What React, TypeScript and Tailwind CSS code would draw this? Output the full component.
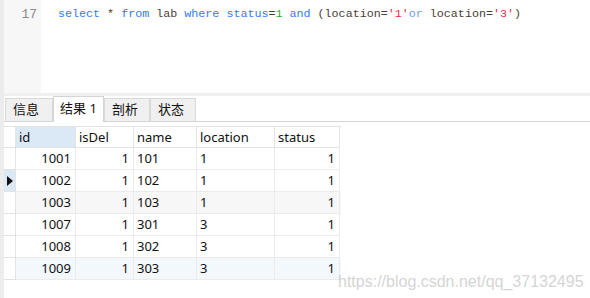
import React from "react";

const ui = { fontFamily: '"Noto Sans", "Noto Sans CJK SC", sans-serif' };
const mono = { fontFamily: '"Liberation Mono", "DejaVu Sans Mono", monospace' };

const cols = [
  { name: "id", w: "w-[60px]", right: true },
  { name: "isDel", w: "w-[58px]", right: true },
  { name: "name", w: "w-[63px]", right: false },
  { name: "location", w: "w-[78px]", right: false },
  { name: "status", w: "w-[65px]", right: true },
];

const rows = [
  ["1001", "1", "101", "1", "1"],
  ["1002", "1", "102", "1", "1"],
  ["1003", "1", "103", "1", "1"],
  ["1007", "1", "301", "3", "1"],
  ["1008", "1", "302", "3", "1"],
  ["1009", "1", "303", "3", "1"],
];

const rowBg = ["bg-white", "bg-white", "bg-[#f7f7f7]", "bg-white", "bg-white", "bg-[#f3f8fd]"];

function Tab({ label, w, active }: { label: string; w: string; active?: boolean }) {
  if (active) {
    return (
      <div className={`${w} h-[26px] bg-white border border-b-0 border-[#d4d4d4] pl-[6px] pt-[2px] text-[13px] text-[#111] -mb-[1px] relative z-10`}>
        {label}
      </div>
    );
  }
  return (
    <div className={`${w} mt-[2px] h-[23px] bg-[#f0f0f0] border border-[#d9d9d9] border-b-0 pl-[7px] pt-[1px] text-[13px] text-[#111]`}>
      {label}
    </div>
  );
}

export default function App() {
  return (
    <div className="w-[590px] h-[298px] flex bg-white overflow-hidden relative" style={ui}>
      <div className="w-[4px] shrink-0 bg-[#ececec]" />
      <div className="flex-1 flex flex-col">
        {/* editor */}
        <div className="h-[93px] flex overflow-hidden">
          <div className="w-[37px] bg-[#f7f7f7] text-right pr-[4px] text-[13px] leading-[18px] text-[#8a8a8a] -mt-[12px]" style={mono}>
            <div>16</div>
            <div>17</div>
          </div>
          <div className="pl-[17px] text-[11.7px] leading-[18px] whitespace-pre text-[#4a3d35] mt-[5px]" style={mono}>
            <span className="text-[#2f7df6]">select</span> * <span className="text-[#2f7df6]">from</span> lab{" "}
            <span className="text-[#2f7df6]">where</span> <span className="text-[#2f7df6]">status</span>=
            <span className="text-[#1fae1f]">1</span> <span className="text-[#2f7df6]">and</span> (location=
            <span className="text-[#f0284a]">'1'</span>
            <span className="text-[#6f9cf0]">or</span> location=<span className="text-[#f0284a]">'3'</span>)
          </div>
        </div>
        <div className="h-[3px] bg-[#f0f0f0]" />
        {/* tabs */}
        <div className="h-[26px] flex items-start pl-[1px] border-b border-[#d4d4d4]">
          <Tab label="信息" w="w-[48px]" />
          <Tab label="结果 1" w="w-[51px]" active />
          <Tab label="剖析" w="w-[46px]" />
          <Tab label="状态" w="w-[46px]" />
        </div>
        {/* grid */}
        <div className="pt-[4px] text-[13px] text-[#111]">
          <div className="flex h-[22px] border-t border-[#e3e3e3] w-[337px]">
            <div className="w-[12px] border-r border-b border-[#e3e3e3]" />
            {cols.map((c, i) => (
              <div
                key={c.name}
                className={`${c.w} h-full border-r border-b border-[#e3e3e3] pl-[3px] leading-[20px] ${i === 0 ? "bg-[#dbe9f7]" : "bg-white"}`}
              >
                {c.name}
              </div>
            ))}
          </div>
          {rows.map((r, ri) => (
            <div key={ri} className={`flex h-[22px] w-[337px] ${rowBg[ri]}`}>
              <div className={`w-[12px] border-r border-b border-[#e3e3e3] flex items-center justify-center ${ri === 1 ? "bg-[#dbe9f7]" : "bg-white"}`}>
                {ri === 1 && (
                  <svg width="6" height="10" viewBox="0 0 6 10">
                    <path d="M0 0 L6 5 L0 10 Z" fill="#111" />
                  </svg>
                )}
              </div>
              {r.map((v, ci) => (
                <div
                  key={ci}
                  className={`${cols[ci].w} border-r border-b border-[#ebebeb] leading-[21px] px-[4px] ${cols[ci].right ? "text-right" : "text-left pl-[3px]"}`}
                >
                  {v}
                </div>
              ))}
            </div>
          ))}
        </div>
      </div>
      <div
        className="absolute left-[338px] top-[270px] text-[16px] text-[#c4c4c4] opacity-70"
        style={{ fontFamily: '"Liberation Sans", Arial, sans-serif' }}
      >
        https://blog.csdn.net/qq_37132495
      </div>
    </div>
  );
}
